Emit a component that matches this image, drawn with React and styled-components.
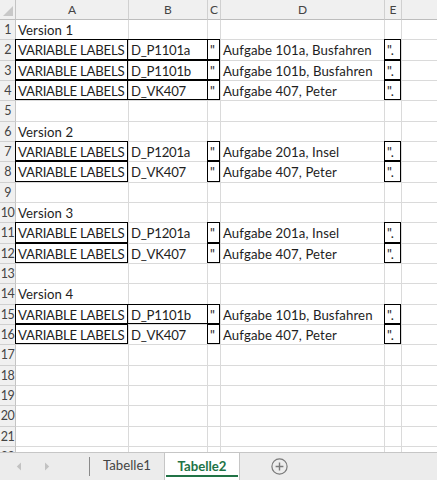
import React from 'react'
import styled, { createGlobalStyle } from 'styled-components'

const GlobalStyle = createGlobalStyle`
  html, body {
    margin: 0;
    padding: 0;
    background: #ffffff;
  }
  body {
    font-family: Lato, "Open Sans", sans-serif;
    overflow: hidden;
  }
`

const COLS = ['A', 'B', 'C', 'D', 'E', 'F']
const GRID = '#dadada'

const Page = styled.div`
  width: 437px;
  height: 480px;
  display: flex;
  flex-direction: column;
  overflow: hidden;
`

const Sheet = styled.div`
  height: 452px;
  overflow: hidden;
  background: #ffffff;
  display: grid;
  grid-template-columns: 16px 113px 79px 13px 164px 17px 60px;
  grid-template-rows: 20px;
  grid-auto-rows: 20.33px;
  align-content: start;
`

const Corner = styled.div`
  background: #f0f0f0;
  border-right: 1px solid #c4c4c4;
  border-bottom: 1px solid #bdbdbd;
  box-sizing: border-box;
  display: flex;
  align-items: flex-end;
  justify-content: flex-end;
  padding: 0 2px 3px 0;
`

const ColHead = styled.div`
  background: #f0f0f0;
  border-right: 1px solid #d0d0d0;
  border-bottom: 1px solid #bdbdbd;
  box-sizing: border-box;
  color: #444444;
  font-size: 12px;
  line-height: 19px;
  text-align: center;
`

const RowHead = styled.div`
  background: #f0f0f0;
  border-right: 1px solid #c4c4c4;
  border-bottom: 1px solid #d0d0d0;
  box-sizing: border-box;
  color: #444444;
  font-size: 12.5px;
  letter-spacing: -0.6px;
  line-height: 20px;
  text-align: center;
  white-space: nowrap;
`

const Cell = styled.div`
  position: relative;
  border-right: 1px solid ${GRID};
  border-bottom: 1px solid ${GRID};
  box-sizing: border-box;
  padding: 0 2px;
  font-size: 13.2px;
  letter-spacing: ${p => (p.$caps ? '-0.25px' : '0.1px')};
  line-height: 20px;
  color: #1e1e1e;
  white-space: nowrap;

  &::after {
    content: '';
    display: ${p => (p.$t || p.$b || p.$l || p.$r ? 'block' : 'none')};
    position: absolute;
    z-index: 1;
    top: -1px;
    left: -1px;
    right: 0;
    bottom: 0;
    border-style: solid;
    border-color: #000000;
    border-width: ${p => `${p.$t ? 1 : 0}px ${p.$r ? 1 : 0}px ${p.$b ? 1 : 0}px ${p.$l ? 1 : 0}px`};
    pointer-events: none;
  }
`

const box = { t: 1, b: 1, l: 1, r: 1 }
const tb = { t: 1, b: 1 }

const line = (b, d, bBorder) => ({
  A: { v: 'VARIABLE LABELS', caps: 1, ...box },
  B: { v: b, caps: 1, ...(bBorder || {}) },
  C: { v: '"', ...box },
  D: { v: d },
  E: { v: '".', ...box },
})

const ROWS = [
  { A: { v: 'Version 1' } },
  line('D_P1101a', 'Aufgabe 101a, Busfahren', tb),
  line('D_P1101b', 'Aufgabe 101b, Busfahren', tb),
  line('D_VK407', 'Aufgabe 407, Peter', tb),
  {},
  { A: { v: 'Version 2' } },
  line('D_P1201a', 'Aufgabe 201a, Insel'),
  line('D_VK407', 'Aufgabe 407, Peter'),
  {},
  { A: { v: 'Version 3' } },
  line('D_P1201a', 'Aufgabe 201a, Insel'),
  line('D_VK407', 'Aufgabe 407, Peter'),
  {},
  { A: { v: 'Version 4' } },
  line('D_P1101b', 'Aufgabe 101b, Busfahren', tb),
  line('D_VK407', 'Aufgabe 407, Peter'),
  {}, {}, {}, {}, {}, {},
]

const TabBar = styled.div`
  height: 28px;
  box-sizing: border-box;
  background: #ececec;
  border-top: 1px solid #c6c6c6;
  display: flex;
  align-items: stretch;
`

const Nav = styled.div`
  width: 89px;
  display: flex;
  align-items: center;
  padding-left: 16px;
  gap: 22px;
  box-sizing: border-box;
`

const Separator = styled.div`
  width: 1px;
  align-self: center;
  height: 19px;
  background: #8a8a8a;
`

const Tab = styled.div`
  position: relative;
  width: ${p => p.$w}px;
  margin-top: -1px;
  box-sizing: border-box;
  display: flex;
  align-items: center;
  justify-content: center;
  padding-bottom: 2px;
  font-size: 13.2px;
  color: ${p => (p.$active ? '#217346' : '#444444')};
  font-weight: ${p => (p.$active ? 700 : 400)};
  background: ${p => (p.$active ? '#ffffff' : 'transparent')};
  border: ${p => (p.$active ? '1px solid #c6c6c6' : 'none')};
  border-bottom: none;

  &::after {
    content: '';
    display: ${p => (p.$active ? 'block' : 'none')};
    position: absolute;
    left: 1px;
    right: 1px;
    bottom: 3px;
    height: 2px;
    background: #217346;
  }
`

const AddButton = styled.div`
  margin-left: 31px;
  display: flex;
  align-items: center;
  padding-bottom: 1px;
`

const Arrow = ({ dir }) => (
  <svg width="6" height="9" viewBox="0 0 6 9">
    <path d={dir === 'left' ? 'M5 0.5 L0.8 4.5 L5 8.5 Z' : 'M1 0.5 L5.2 4.5 L1 8.5 Z'} fill="#c2c2c2" />
  </svg>
)

export default function App() {
  return (
    <Page>
      <GlobalStyle />
      <Sheet>
        <Corner>
          <svg width="10" height="10" viewBox="0 0 10 10">
            <path d="M10 0 L10 10 L0 10 Z" fill="#c8c8c8" />
          </svg>
        </Corner>
        {COLS.map(c => (
          <ColHead key={c}>{c === 'F' ? '' : c}</ColHead>
        ))}
        {ROWS.map((row, i) => (
          <React.Fragment key={i}>
            <RowHead>{i + 1}</RowHead>
            {COLS.map(c => {
              const cell = row[c] || {}
              return (
                <Cell key={c} $caps={cell.caps} $t={cell.t} $b={cell.b} $l={cell.l} $r={cell.r}>
                  {cell.v}
                </Cell>
              )
            })}
          </React.Fragment>
        ))}
      </Sheet>
      <TabBar>
        <Nav>
          <Arrow dir="left" />
          <Arrow dir="right" />
        </Nav>
        <Separator />
        <Tab $w={74}>Tabelle1</Tab>
        <Tab $w={76} $active>Tabelle2</Tab>
        <AddButton>
          <svg width="17" height="17" viewBox="0 0 17 17">
            <circle cx="8.5" cy="8.5" r="7.6" fill="none" stroke="#7a7a7a" strokeWidth="1.2" />
            <path d="M8.5 4.6 V12.4 M4.6 8.5 H12.4" stroke="#7a7a7a" strokeWidth="1.4" />
          </svg>
        </AddButton>
      </TabBar>
    </Page>
  )
}
